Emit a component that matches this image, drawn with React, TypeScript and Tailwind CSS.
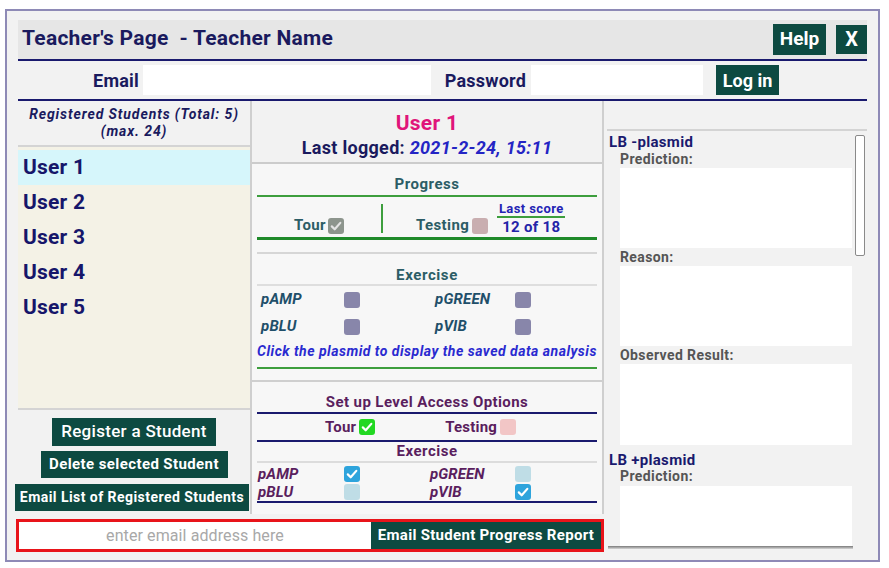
import type { ReactNode } from "react";

function Check({ color = "white" }: { color?: string }) {
  return (
    <svg viewBox="0 0 16 16" className="h-full w-full">
      <path
        d="M3.8 8.4l2.9 2.9 5.6-6.4"
        fill="none"
        stroke={color}
        strokeWidth="2.2"
        strokeLinecap="round"
        strokeLinejoin="round"
      />
    </svg>
  );
}

function Box({ className, checked, tick }: { className: string; checked?: boolean; tick?: string }) {
  return (
    <span className={`inline-block size-4 shrink-0 rounded-[3px] ${className}`}>
      {checked && <Check color={tick} />}
    </span>
  );
}

function DarkButton({ className, children }: { className: string; children: ReactNode }) {
  return (
    <button className={`flex items-center justify-center whitespace-nowrap bg-[#0d4a41] font-bold text-white ${className}`}>
      {children}
    </button>
  );
}

const users = ["User 1", "User 2", "User 3", "User 4", "User 5"];

export default function App() {
  return (
    <div className="h-[568px] w-[889px] bg-white pl-[5px] pt-[9px] font-['Roboto',sans-serif]">
      <div className="flex h-[553px] w-[875px] flex-col border-2 border-[#8e8ab6] bg-[#f2f2f2] px-[11px] pt-[9px]">
        {/* title bar */}
        <div className="flex h-[39px] items-center justify-between bg-[#e6e6e6] pb-px">
          <h1 className="pl-1 text-[21px] font-bold tracking-[0.25px] text-[#1a1a5e]">
            Teacher's Page&nbsp; - Teacher Name
          </h1>
          <div className="flex items-center gap-[10px]">
            <DarkButton className="h-[31px] w-[53px] text-[19px]">Help</DarkButton>
            <DarkButton className="h-[29px] w-[31px] text-[20px]">X</DarkButton>
          </div>
        </div>
        <div className="h-[2px] bg-[#1a1a6e]" />

        {/* login row */}
        <div className="flex h-[38px] items-center">
          <span className="w-[121px] text-right text-[18px] font-bold tracking-[0.2px] text-[#1a1a5e]">Email</span>
          <div className="ml-[4px] h-[30px] w-[288px] bg-white" />
          <span className="w-[95px] text-right text-[18px] font-bold tracking-[0.2px] text-[#1a1a5e]">Password</span>
          <div className="ml-[5px] h-[30px] w-[172px] bg-white" />
          <DarkButton className="ml-[13px] h-[30px] w-[63px] text-[18px]">Log in</DarkButton>
        </div>
        <div className="h-[2px] bg-[#1a1a6e]" />

        <div className="flex">
          <div className="flex w-[586px] flex-col">
            <div className="flex h-[413px]">
              {/* students column */}
              <div className="flex w-[234px] flex-col border-r-2 border-[#cfcfcf]">
                <div className="h-[44px] whitespace-nowrap pt-[5px] text-center text-[14px] font-bold italic leading-[17px] tracking-[0.9px] text-[#1a1a5e]">
                  Registered Students (Total: 5)
                  <br />
                  (max. 24)
                </div>
                <div className="h-[2px] bg-[#d4d4d4]" />
                <div className="flex-1 bg-[#f4f2e6] pt-[3px]">
                  {users.map((u, i) => (
                    <div
                      key={u}
                      className={`flex h-[35px] items-center pl-[5px] text-[21px] font-bold tracking-[0.2px] text-[#16166a] ${
                        i === 0 ? "bg-[#d6f6fb]" : ""
                      }`}
                    >
                      {u}
                    </div>
                  ))}
                </div>
                <div className="h-[2px] bg-[#d4d4d4]" />
                <div className="flex h-[104px] flex-col items-center pt-[8px]">
                  <DarkButton className="h-[28px] w-[164px] text-[17px] font-medium tracking-[0.3px]">
                    Register a Student
                  </DarkButton>
                  <DarkButton className="mt-[5px] h-[27px] w-[187px] text-[15px] tracking-[0.4px]">
                    Delete selected Student
                  </DarkButton>
                  <DarkButton className="-ml-[4px] mt-[6px] h-[27px] w-[234px] text-[14px] tracking-[0.45px]">
                    Email List of Registered Students
                  </DarkButton>
                </div>
              </div>

              {/* student detail column */}
              <div className="flex w-[352px] flex-col border-r-2 border-[#cfcfcf] bg-[#f7f7f7]">
                <div className="h-[63px] border-b-2 border-[#cccccc] bg-[#f2f2f2] pt-[10px] text-center">
                  <div className="text-[21px] font-bold leading-[24px] tracking-[0.3px] text-[#e0157a]">User 1</div>
                  <div className="mt-[2px] whitespace-nowrap text-[18px] font-bold leading-[22px] tracking-[0.3px] text-[#1a1a5e]">
                    Last logged: <i className="text-[#2424c4]">2021-2-24, 15:11</i>
                  </div>
                </div>

                <div className="px-[5px]">
                  {/* progress */}
                  <div className="h-[31px] pt-[10px] text-center text-[15px] font-bold leading-[21px] tracking-[0.5px] text-[#2c5d66]">
                    Progress
                  </div>
                  <div className="h-[2px] bg-[#3d9e3d]" />
                  <div className="flex h-[40px] text-[15px] font-bold leading-[18px] tracking-[0.4px] text-[#2c5d66]">
                    <div className="flex w-[124px] items-end justify-center gap-[2px] pb-[3px]">
                      <span>Tour</span>
                      <Box className="bg-[#8d958d]" checked tick="#e4e4e4" />
                    </div>
                    <div className="mb-[4px] mt-[7px] w-[2px] bg-[#3d9e3d]" />
                    <div className="flex items-end gap-[3px] pb-[3px] pl-[33px]">
                      <span>Testing</span>
                      <Box className="bg-[#c9aeb0]" />
                    </div>
                    <div className="ml-[9px] flex w-[68px] flex-col items-center pt-[4px]">
                      <span className="w-full border-b-2 border-[#3d9e3d] text-center text-[13px] leading-[15px] tracking-[0.4px] text-[#2424b4]">
                        Last score
                      </span>
                      <span className="text-[15px] leading-[19px] tracking-[0.3px] text-[#2424a8]">12 of 18</span>
                    </div>
                  </div>
                  <div className="h-[3px] bg-[#1f8a2a]" />
                  <div className="h-[12px]" />
                  <div className="h-[2px] bg-[#d6d6d6]" />

                  {/* exercise */}
                  <div className="flex h-[30px] items-end justify-center text-[15px] font-bold leading-[18px] tracking-[0.6px] text-[#2c5d66]">
                    Exercise
                  </div>
                  <div className="h-[2px] bg-[#dedede]" />
                  {[
                    ["pAMP", "pGREEN"],
                    ["pBLU", "pVIB"],
                  ].map(([a, b]) => (
                    <div
                      key={a}
                      className="grid h-[27px] grid-cols-2 items-center text-[15px] font-bold italic tracking-[0.2px] text-[#1f4f6a]"
                    >
                      <div className="flex items-center pl-[4px]">
                        <span className="w-[83px]">{a}</span>
                        <Box className="bg-[#8886aa]" />
                      </div>
                      <div className="flex items-center pl-[8px]">
                        <span className="w-[80px]">{b}</span>
                        <Box className="bg-[#8886aa]" />
                      </div>
                    </div>
                  ))}
                  <div className="flex h-[22px] items-center justify-center whitespace-nowrap text-[14px] font-bold italic tracking-[0.5px] text-[#2a2ad0]">
                    Click the plasmid to display the saved data analysis
                  </div>
                  <div className="mt-[5px] h-[2px] bg-[#3d9e3d]" />
                  <div className="h-[11px]" />
                </div>
                <div className="h-[2px] bg-[#cfcfcf]" />

                {/* level access */}
                <div className="px-[5px] text-[#5a1e5e]">
                  <div className="flex h-[30px] items-end justify-center whitespace-nowrap pb-px text-[15px] font-bold leading-[18px] tracking-[0.4px]">
                    Set up Level Access Options
                  </div>
                  <div className="h-[2px] bg-[#1a1a6e]" />
                  <div className="flex h-[26px] items-center pl-[68px] text-[15px] font-bold tracking-[0.2px]">
                    <span>Tour</span>
                    <Box className="ml-[3px] bg-[#22d822]" checked />
                    <span className="ml-[70px]">Testing</span>
                    <Box className="ml-[3px] bg-[#f2c6c6]" />
                  </div>
                  <div className="h-[2px] bg-[#1a1a6e]" />
                  <div className="flex h-[19px] items-center justify-center text-[15px] font-bold tracking-[0.5px]">
                    Exercise
                  </div>
                  <div className="h-[2px] bg-[#dcdcdc]" />
                  {[
                    ["pAMP", true, "pGREEN", false],
                    ["pBLU", false, "pVIB", true],
                  ].map(([a, ac, b, bc]) => (
                    <div
                      key={a as string}
                      className="grid h-[18px] grid-cols-2 items-center text-[15px] font-bold italic tracking-[0.1px]"
                    >
                      <div className="flex items-center pl-px">
                        <span className="w-[86px]">{a}</span>
                        <Box className={ac ? "bg-[#2ea4dc]" : "bg-[#bfdde6]"} checked={ac as boolean} />
                      </div>
                      <div className="flex items-center pl-[3px]">
                        <span className="w-[85px]">{b}</span>
                        <Box className={bc ? "bg-[#2ea4dc]" : "bg-[#bfdde6]"} checked={bc as boolean} />
                      </div>
                    </div>
                  ))}
                  <div className="mt-[2px] h-[2px] bg-[#1a1a6e]" />
                </div>
              </div>
            </div>

            {/* email report bar */}
            <div className="-ml-[2px] mt-[5px] flex h-[33px] w-[588px] border-[3px] border-[#e8141a] bg-white">
              <div className="flex flex-1 items-center justify-center text-[16px] tracking-[0.1px] text-[#a8a8a8]">
                enter email address here
              </div>
              <DarkButton className="w-[230px] text-[15px] tracking-[0.3px]">Email Student Progress Report</DarkButton>
            </div>
          </div>

          {/* analysis column */}
          <div className="flex flex-1 flex-col">
            <div className="h-[28px]" />
            <div className="ml-[3px] h-[2px] bg-[#d4d4d4]" />
            <div className="relative h-[415px] overflow-hidden pt-[2px] text-[14px] font-bold tracking-[0.4px] text-[#555555]">
              <div className="h-[18px] pl-[5px] text-[15px] leading-[18px] tracking-[0.3px] text-[#1a1a6e]">LB -plasmid</div>
              <div className="h-[16px] pl-[16px] leading-[16px]">Prediction:</div>
              <div className="ml-[16px] mt-px h-[80px] w-[232px] bg-white" />
              <div className="flex h-[18px] items-center pl-[16px]">Reason:</div>
              <div className="ml-[16px] h-[80px] w-[232px] bg-white" />
              <div className="flex h-[18px] items-center pl-[16px]">Observed Result:</div>
              <div className="ml-[16px] h-[81px] w-[232px] bg-white" />
              <div className="mt-[7px] h-[16px] pl-[5px] text-[15px] leading-[16px] tracking-[0.3px] text-[#1a1a6e]">
                LB +plasmid
              </div>
              <div className="h-[17px] pl-[16px] leading-[17px]">Prediction:</div>
              <div className="ml-[16px] mt-px h-[80px] w-[232px] bg-white" />
              <div className="absolute right-[2px] top-[4px] h-[121px] w-[10px] rounded-[2px] border border-[#8a8a8a] bg-white" />
            </div>
            <div className="ml-[4px] mr-[14px] h-[3px] bg-gradient-to-b from-[#7a7a7a] to-[#d8d8d8]" />
          </div>
        </div>
      </div>
    </div>
  );
}
